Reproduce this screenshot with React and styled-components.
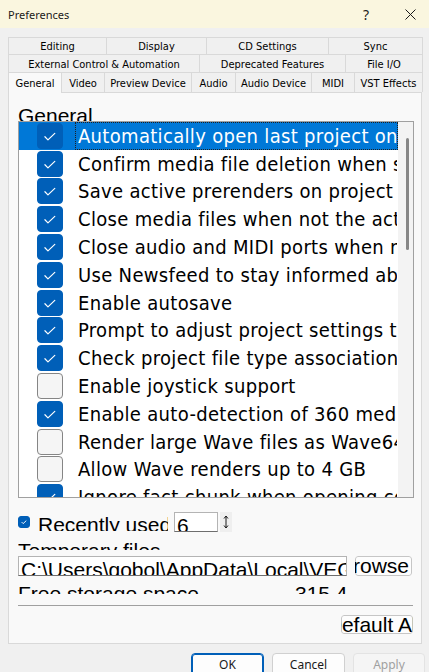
import React from 'react';
import styled, { createGlobalStyle } from 'styled-components';

const UI_FONT = `"Noto Sans", "Open Sans", "DejaVu Sans", sans-serif`;
const TAB_FONT = `"DejaVu Sans Condensed", "DejaVu Sans", sans-serif`;
const LIST_FONT = `"DejaVu Sans Condensed", "DejaVu Sans", sans-serif`;
const BIG_FONT = `"Liberation Sans", Arial, sans-serif`;

const GlobalStyle = createGlobalStyle`
  html, body {
    margin: 0;
    padding: 0;
    background: #f0f0f0;
    overflow: hidden;
  }
  * { box-sizing: border-box; }
`;

const tabRows = [
  [['Editing', 98], ['Display', 100], ['CD Settings', 122], ['Sync', 94]],
  [['External Control & Automation', 191], ['Deprecated Features', 146], ['File I/O', 77]],
  [['General', 53], ['Video', 43], ['Preview Device', 87], ['Audio', 44], ['Audio Device', 76], ['MIDI', 43], ['VST Effects', 68]],
];

const options = [
  ['Automatically open last project on startup', true],
  ['Confirm media file deletion when saving', true],
  ['Save active prerenders on project close', true],
  ['Close media files when not the active application', true],
  ['Close audio and MIDI ports when not the active application', true],
  ['Use Newsfeed to stay informed about updates', true],
  ['Enable autosave', true],
  ['Prompt to adjust project settings to match first media', true],
  ['Check project file type associations at startup', true],
  ['Enable joystick support', false],
  ['Enable auto-detection of 360 media', true],
  ['Render large Wave files as Wave64', false],
  ['Allow Wave renders up to 4 GB', false],
  ['Ignore fact chunk when opening compressed files', true],
];

const Window = styled.div`
  width: 429px;
  height: 672px;
  display: flex;
  flex-direction: column;
  background: #f0f0f0;
  overflow: hidden;
`;

const TitleBar = styled.div`
  height: 28px;
  flex: none;
  display: flex;
  align-items: center;
  padding-left: 8px;
  background: #faf6df;
  font-family: ${UI_FONT};
  font-size: 11px;
  color: #1a1a1a;
`;

const Title = styled.span`
  flex: 1;
`;

const TitleButton = styled.div`
  width: ${p => p.$w}px;
  height: 28px;
  display: flex;
  align-items: center;
  justify-content: center;
  font-size: 14px;
  color: #1a1a1a;
`;

const Body = styled.div`
  padding: 9px 0 0 8px;
  display: flex;
  flex-direction: column;
`;

const TabRow = styled.div`
  display: flex;
  height: ${p => p.$h}px;
  border-left: 1px solid #d9d9d9;
  width: 414px;
`;

const Tab = styled.div`
  width: ${p => p.$w}px;
  flex: none;
  display: flex;
  align-items: center;
  justify-content: center;
  padding-top: 1px;
  border-top: 1px solid #d9d9d9;
  border-right: 1px solid #d9d9d9;
  background: ${p => (p.$active ? '#f9f9f9' : '#f0f0f0')};
  margin-bottom: ${p => (p.$active ? '-1px' : '0')};
  position: relative;
  z-index: ${p => (p.$active ? 1 : 0)};
  font-family: ${TAB_FONT};
  font-size: 11px;
  color: #000;
  white-space: nowrap;
`;

const Panel = styled.div`
  width: 414px;
  height: 552px;
  border: 1px solid #d9d9d9;
  background: #f9f9f9;
  padding: 12px 7px 0 9px;
  display: flex;
  flex-direction: column;
`;

const ClippedLabel = styled.div`
  height: ${p => p.$h}px;
  overflow: hidden;
  font-family: ${BIG_FONT};
  font-size: 21px;
  line-height: 21px;
  color: #000;
  white-space: nowrap;
  flex: none;
  width: ${p => (p.$w ? `${p.$w}px` : 'auto')};
  margin-left: ${p => p.$ml || 0}px;
  margin-top: ${p => p.$mt || 0}px;
`;

const ListBox = styled.div`
  display: flex;
  height: 377px;
  flex: none;
  border: 1px solid #a0a0a0;
  background: #fff;
`;

const Rows = styled.div`
  flex: 1;
  overflow: hidden;
`;

const Row = styled.div`
  display: flex;
  align-items: center;
  height: 27.8px;
  padding-left: 18px;
  background: ${p => (p.$selected ? '#0078d7' : 'transparent')};
  color: ${p => (p.$selected ? '#fff' : '#000')};
  white-space: nowrap;
  overflow: hidden;
`;

const RowLabel = styled.span`
  flex: 1;
  height: 100%;
  display: flex;
  align-items: center;
  margin-left: 12px;
  padding-left: 2px;
  border: 1px dotted ${p => (p.$selected ? '#202020' : 'transparent')};
  font-family: ${LIST_FONT};
  font-size: 20px;
  letter-spacing: 0.32px;
  overflow: hidden;
`;

const ScrollTrack = styled.div`
  width: 15px;
  flex: none;
  background: #f3f3f3;
  padding: 16px 0 0 8px;
`;

const ScrollThumb = styled.div`
  width: 3px;
  height: 112px;
  border-radius: 2px;
  background: #868686;
`;

const Box = styled.span`
  width: ${p => p.$size}px;
  height: ${p => p.$size}px;
  flex: none;
  border-radius: ${p => (p.$size > 16 ? 4 : 3)}px;
  background: ${p => (p.$checked ? '#005fb8' : '#f5f5f5')};
  border: 1px solid ${p => (p.$checked ? '#005fb8' : '#858585')};
  display: flex;
  align-items: center;
  justify-content: center;
`;

const Checkbox = ({ checked, size = 26 }) => (
  <Box $checked={checked} $size={size}>
    {checked && (
      <svg width={size} height={size} viewBox="0 0 26 26">
        <path d="M7.5 13.8 L10.8 17.2 L18.2 10.2" fill="none" stroke="#fff" strokeWidth={size > 16 ? 1.3 : 2.4} strokeLinecap="round" strokeLinejoin="round" />
      </svg>
    )}
  </Box>
);

const FieldRow = styled.div`
  display: flex;
  align-items: ${p => p.$align || 'center'};
  height: ${p => p.$h || 20}px;
  flex: none;
  margin-top: ${p => p.$mt}px;
  clip-path: inset(0);
`;

const Input = styled.div`
  width: ${p => p.$w}px;
  height: 20px;
  flex: none;
  margin-left: ${p => p.$ml || 0}px;
  border: 1px solid #b4b4b4;
  border-bottom-color: #6e6e6e;
  background: #fff;
  padding-left: 2px;
  overflow: hidden;
  font-family: ${BIG_FONT};
  font-size: 21px;
  line-height: 21px;
  padding-top: 2px;
  white-space: nowrap;
`;

const Spin = styled.div`
  width: 12px;
  height: 20px;
  margin-left: 2px;
  background: #efefef;
  display: flex;
  align-items: center;
  justify-content: center;
`;

// overflow stays visible so the caption can spill past the edges; clip-path trims it
const PlainButton = styled.div`
  width: ${p => p.$w}px;
  height: ${p => p.$h}px;
  flex: none;
  margin-left: ${p => p.$ml || 0}px;
  padding-right: ${p => p.$pr || 0}px;
  border: 1px solid #c6c6c6;
  border-radius: 3px;
  background: #fdfdfd;
  display: flex;
  align-items: center;
  justify-content: ${p => p.$justify || 'center'};
  clip-path: inset(0 round 3px);
  white-space: nowrap;
  font-family: ${BIG_FONT};
  font-size: 21px;
  color: #000;
`;

const ButtonText = styled.span`
  flex: none;
`;

const Separator = styled.div`
  height: 1px;
  flex: none;
  margin-top: 11px;
  width: 395px;
  background: #a0a0a0;
`;

const DefaultRow = styled.div`
  display: flex;
  justify-content: flex-end;
  margin-top: 9px;
  padding-right: 1px;
`;

const ButtonBar = styled.div`
  display: flex;
  justify-content: flex-end;
  gap: 8px;
  padding: 9px 4px 0 0;
`;

const DialogButton = styled.div`
  width: ${p => p.$w}px;
  height: 24px;
  border-radius: 4px;
  border: 1px solid ${p => (p.$primary ? '#005fb8' : p.$disabled ? '#e3e3e3' : '#d0d0d0')};
  box-shadow: ${p => (p.$primary ? 'inset 0 0 0 1px #005fb8' : 'none')};
  background: ${p => (p.$disabled ? '#f5f5f5' : '#fdfdfd')};
  color: ${p => (p.$disabled ? '#a0a0a0' : '#1a1a1a')};
  display: flex;
  align-items: center;
  justify-content: center;
  font-family: ${UI_FONT};
  font-size: 12px;
  padding-bottom: 2px;
`;

export default function App() {
  return (
    <Window>
      <GlobalStyle />
      <TitleBar>
        <Title>Preferences</Title>
        <TitleButton $w={50}>?</TitleButton>
        <TitleButton $w={38}>
          <svg width="11" height="11" viewBox="0 0 11 11">
            <path d="M0.5 0.5 L10.5 10.5 M10.5 0.5 L0.5 10.5" stroke="#1a1a1a" strokeWidth="1" />
          </svg>
        </TitleButton>
      </TitleBar>
      <Body>
        {tabRows.map((row, i) => (
          <TabRow key={i} $h={i === 0 ? 17 : i === 1 ? 18 : 20}>
            {row.map(([label, w]) => (
              <Tab key={label} $w={w} $active={label === 'General'}>{label}</Tab>
            ))}
          </TabRow>
        ))}
        <Panel>
          <ClippedLabel $h={16}>General</ClippedLabel>
          <ListBox>
            <Rows>
              {options.map(([label, checked], i) => (
                <Row key={label} $selected={i === 0}>
                  <Checkbox checked={checked} />
                  <RowLabel $selected={i === 0}>{label}</RowLabel>
                </Row>
              ))}
            </Rows>
            <ScrollTrack>
              <ScrollThumb />
            </ScrollTrack>
          </ListBox>
          <FieldRow $mt={14}>
            <Checkbox checked size={12} />
            <ClippedLabel $h={17} $w={130} $ml={8}>Recently used</ClippedLabel>
            <Input $w={44} $ml={6}>6</Input>
            <Spin>
              <svg width="6" height="14" viewBox="0 0 6 14">
                <path d="M3 1 V13 M1 3.5 L3 1 L5 3.5 M1 10.5 L3 13 L5 10.5" fill="none" stroke="#1a1a1a" strokeWidth="1" />
              </svg>
            </Spin>
          </FieldRow>
          <ClippedLabel $h={10} $mt={8}>Temporary files</ClippedLabel>
          <FieldRow $mt={6}>
            <Input $w={329}>C:\Users\gobol\AppData\Local\VEGAS Pro</Input>
            <PlainButton $w={57} $h={20} $ml={8} $pr={2} $justify="flex-end"><ButtonText>Browse</ButtonText></PlainButton>
          </FieldRow>
          <FieldRow $mt={7} $h={11} $align="flex-start">
            <ClippedLabel $h={11} $w={277}>Free storage space</ClippedLabel>
            <ClippedLabel $h={11} $w={52}>315.4 GB</ClippedLabel>
          </FieldRow>
          <Separator />
          <DefaultRow>
            <PlainButton $w={72} $h={19} $pr={6}><ButtonText>Default All</ButtonText></PlainButton>
          </DefaultRow>
        </Panel>
        <ButtonBar>
          <DialogButton $w={73} $primary>OK</DialogButton>
          <DialogButton $w={73}>Cancel</DialogButton>
          <DialogButton $w={72} $disabled>Apply</DialogButton>
        </ButtonBar>
      </Body>
    </Window>
  );
}
